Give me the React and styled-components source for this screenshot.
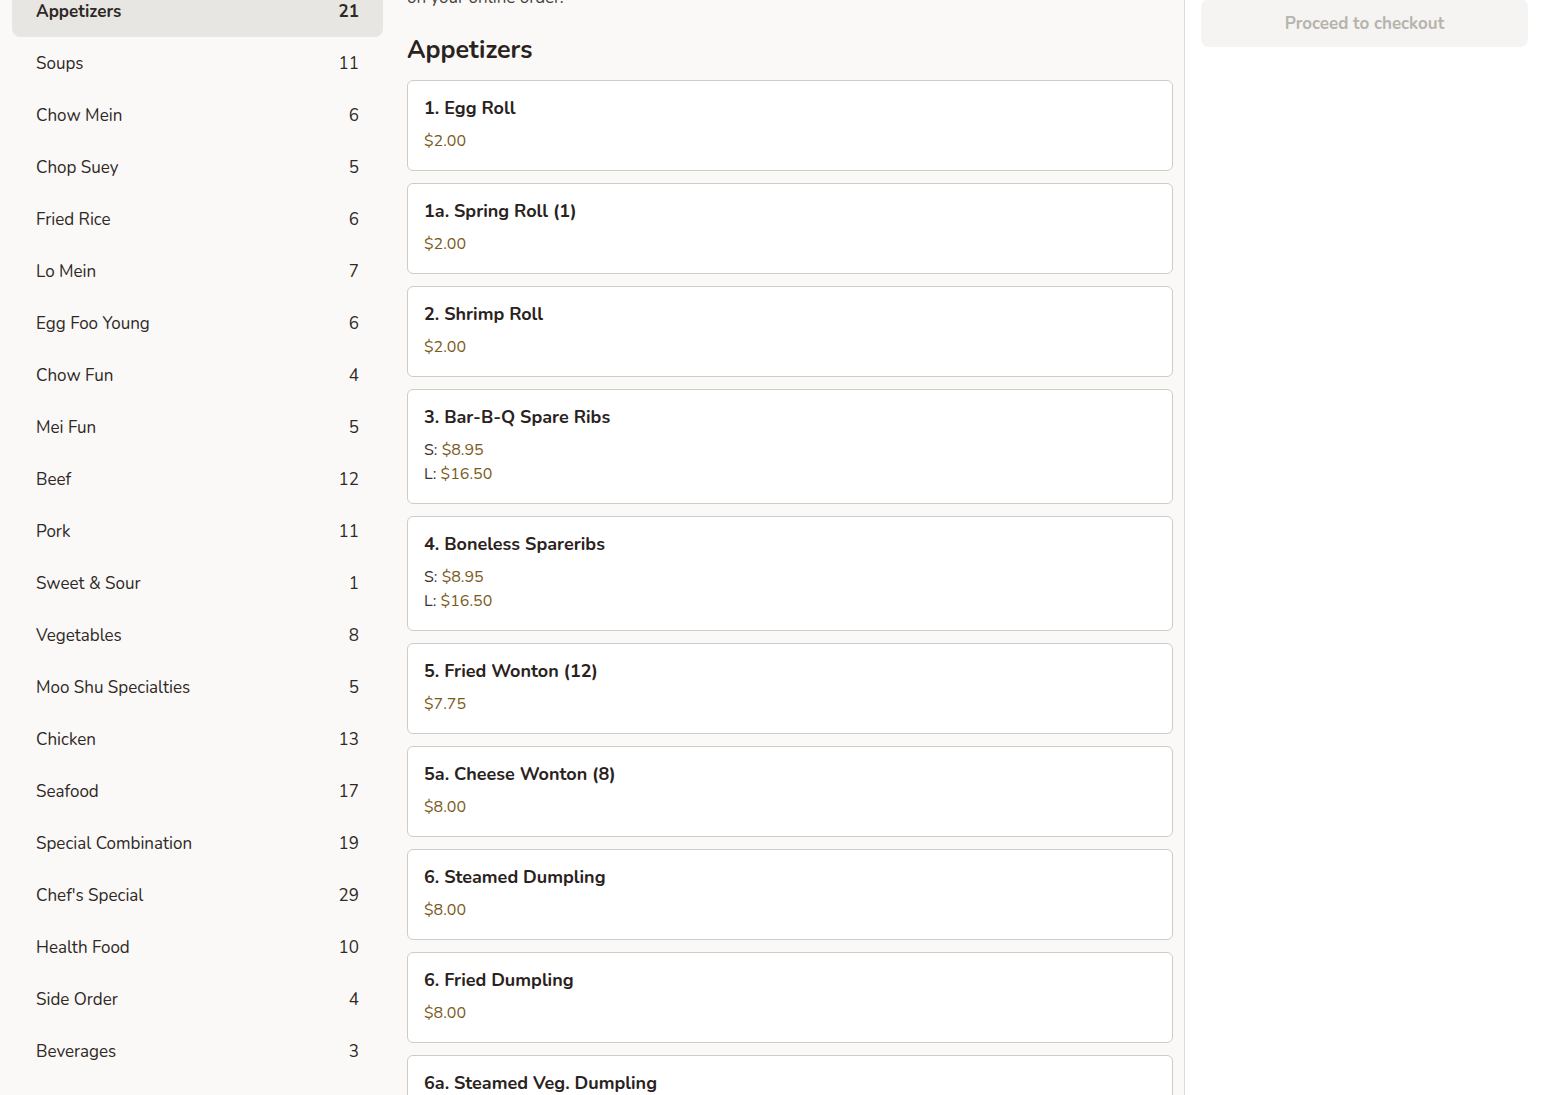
import styled, {createGlobalStyle} from "styled-components"

const Global = createGlobalStyle`
  html, body {
    margin: 0;
    padding: 0;
    background: #faf9f7;
    overflow: hidden;
  }
  body {
    font-family: "Nunito", Lato, "Noto Sans", sans-serif;
    color: #2a2220;
  }
`

const Page = styled.div`
  display: grid;
  grid-template-columns: 395px 1fr 360px;
  height: 1095px;
  overflow: hidden;
`

const Side = styled.nav`
  padding: 0 12px;
  margin-top: -15px;
  display: flex;
  flex-direction: column;
`

const CatRow = styled.div`
  height: 52px;
  display: flex;
  align-items: center;
  justify-content: space-between;
  padding: 0 24px;
  border-radius: 8px;
  font-size: 17px;
  color: #2e2826;
  background: ${p => (p.$active ? "#e8e6e2" : "transparent")};
  font-weight: ${p => (p.$active ? 700 : 400)};
`

const Main = styled.main`
  padding: 0 11px 0 12px;
  margin-top: -14px;
`

const Intro = styled.p`
  margin: 0;
  font-size: 17px;
  line-height: 24px;
  color: #4a4240;
`

const Heading = styled.h2`
  margin: 24px 0 14px;
  font-size: 25px;
  line-height: 32px;
  font-weight: 700;
  color: #2a2220;
`

const List = styled.div`
  display: flex;
  flex-direction: column;
  gap: 12px;
`

const Card = styled.div`
  background: #fff;
  border: 1px solid #cfccc8;
  border-radius: 6px;
  padding: 15px 16px 17px;
  display: flex;
  flex-direction: column;
  gap: 9px;
`

const Title = styled.div`
  font-size: 18px;
  line-height: 24px;
  font-weight: 700;
  color: #2a2220;
`

const Prices = styled.div`
  display: flex;
  flex-direction: column;
`

const PriceLine = styled.div`
  font-size: 16px;
  line-height: 24px;
  color: #3a3230;
`

const Price = styled.span`
  color: #7a5a1c;
`

const Cart = styled.aside`
  background: #fff;
  border-left: 1px solid #dedbd6;
  padding: 0 16px;
  margin-top: -1px;
`

const Checkout = styled.button`
  width: 100%;
  height: 48px;
  border: none;
  border-radius: 8px;
  background: #f5f4f2;
  color: #b7b3ad;
  font-family: inherit;
  font-size: 17px;
  font-weight: 700;
`

const cats = [
  ["Appetizers", 21],
  ["Soups", 11],
  ["Chow Mein", 6],
  ["Chop Suey", 5],
  ["Fried Rice", 6],
  ["Lo Mein", 7],
  ["Egg Foo Young", 6],
  ["Chow Fun", 4],
  ["Mei Fun", 5],
  ["Beef", 12],
  ["Pork", 11],
  ["Sweet & Sour", 1],
  ["Vegetables", 8],
  ["Moo Shu Specialties", 5],
  ["Chicken", 13],
  ["Seafood", 17],
  ["Special Combination", 19],
  ["Chef's Special", 29],
  ["Health Food", 10],
  ["Side Order", 4],
  ["Beverages", 3],
]

const items = [
  ["1. Egg Roll", [["", "$2.00"]]],
  ["1a. Spring Roll (1)", [["", "$2.00"]]],
  ["2. Shrimp Roll", [["", "$2.00"]]],
  ["3. Bar-B-Q Spare Ribs", [["S", "$8.95"], ["L", "$16.50"]]],
  ["4. Boneless Spareribs", [["S", "$8.95"], ["L", "$16.50"]]],
  ["5. Fried Wonton (12)", [["", "$7.75"]]],
  ["5a. Cheese Wonton (8)", [["", "$8.00"]]],
  ["6. Steamed Dumpling", [["", "$8.00"]]],
  ["6. Fried Dumpling", [["", "$8.00"]]],
  ["6a. Steamed Veg. Dumpling", [["", "$8.00"]]],
]

export default function App() {
  return (
    <>
      <Global />
      <Page>
        <Side>
          {cats.map(([name, n], i) => (
            <CatRow key={name} $active={i === 0}>
              <span>{name}</span>
              <span>{n}</span>
            </CatRow>
          ))}
        </Side>
        <Main>
          <Intro>on your online order.</Intro>
          <Heading>Appetizers</Heading>
          <List>
            {items.map(([title, prices]) => (
              <Card key={title}>
                <Title>{title}</Title>
                <Prices>
                  {prices.map(([size, p]) => (
                    <PriceLine key={size + p}>
                      {size && `${size}: `}
                      <Price>{p}</Price>
                    </PriceLine>
                  ))}
                </Prices>
              </Card>
            ))}
          </List>
        </Main>
        <Cart>
          <Checkout>Proceed to checkout</Checkout>
        </Cart>
      </Page>
    </>
  )
}
